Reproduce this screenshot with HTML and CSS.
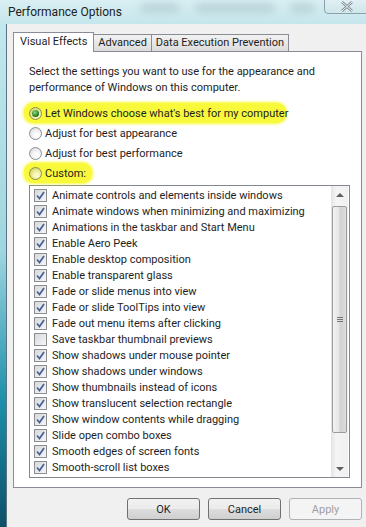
FILE: index.html
```html
<!DOCTYPE html>
<html lang="en">
<head>
    <meta charset="UTF-8">
    <meta name="viewport" content="width=device-width, initial-scale=1.0">
    <title>Performance Options</title>
    <link rel="stylesheet" href="styles.css">
</head>
<body>
    <div class="window">
        <div class="titlebar">
            <span class="title">Performance Options</span>
            <span class="blur b1"></span>
            <span class="blur b2"></span>
            <span class="blur b3"></span>
            <div class="close">
                <svg width="14" height="11" viewBox="0 0 14 11">
                    <path d="M2 1 L12 10 M12 1 L2 10" stroke="#7e8a90" stroke-width="2.4" fill="none"/>
                    <path d="M2 1 L12 10 M12 1 L2 10" stroke="#f4f8f9" stroke-width="1" fill="none"/>
                </svg>
            </div>
        </div>
        <div class="frame">
            <div class="frame-left"></div>
            <div class="body">
                <div class="tabs">
                    <div class="tab active">Visual Effects</div>
                    <div class="tab">Advanced</div>
                    <div class="tab">Data Execution Prevention</div>
                </div>
                <div class="panel">
                    <p class="intro">Select the settings you want to use for the appearance and performance of Windows on this computer.</p>

                    <div class="radios">
                        <div class="radio-row marked wide"><span class="radio checked"></span><span>Let Windows choose what's best for my computer</span></div>
                        <div class="radio-row"><span class="radio"></span><span>Adjust for best appearance</span></div>
                        <div class="radio-row"><span class="radio"></span><span>Adjust for best performance</span></div>
                        <div class="radio-row marked"><span class="radio"></span><span>Custom:</span></div>
                    </div>

                    <div class="listbox">
                        <div class="items" id="items"></div>
                        <div class="scrollbar">
                            <div class="arrow up"></div>
                            <div class="track"><div class="thumb"><span class="grip"></span></div></div>
                            <div class="arrow down"></div>
                        </div>
                    </div>
                </div>
                <div class="buttons">
                    <button class="btn">OK</button>
                    <button class="btn">Cancel</button>
                    <button class="btn" disabled>Apply</button>
                </div>
            </div>
        </div>
    </div>
    <script>
        // visual effects list, false = unchecked
        const effects = [
            ["Animate controls and elements inside windows", true],
            ["Animate windows when minimizing and maximizing", true],
            ["Animations in the taskbar and Start Menu", true],
            ["Enable Aero Peek", true],
            ["Enable desktop composition", true],
            ["Enable transparent glass", true],
            ["Fade or slide menus into view", true],
            ["Fade or slide ToolTips into view", true],
            ["Fade out menu items after clicking", true],
            ["Save taskbar thumbnail previews", false],
            ["Show shadows under mouse pointer", true],
            ["Show shadows under windows", true],
            ["Show thumbnails instead of icons", true],
            ["Show translucent selection rectangle", true],
            ["Show window contents while dragging", true],
            ["Slide open combo boxes", true],
            ["Smooth edges of screen fonts", true],
            ["Smooth-scroll list boxes", true]
        ];
        const tick = '<svg width="9" height="9" viewBox="0 0 9 9"><path d="M1 4.5 L3.5 7.5 L8 1" stroke="#4d6396" stroke-width="1.8" fill="none"/></svg>';
        const list = document.getElementById("items");
        effects.forEach(function(e) {
            const row = document.createElement("div");
            row.className = "item";
            row.innerHTML = '<span class="check">' + (e[1] ? tick : '') + '</span>' + e[0];
            list.appendChild(row);
        });
    </script>
</body>
</html>
```

FILE: styles.css
```css
body {
    margin: 0;
    font-family: Roboto, "Noto Sans", sans-serif;
    font-size: 11px;
    color: #1e1e1e;
    background: #f0f0f0;
}
.window {
    width: 366px;
    height: 527px;
    display: flex;
    flex-direction: column;
    overflow: hidden;
}
.titlebar {
    height: 24px;
    position: relative;
    display: flex;
    align-items: center;
    padding-left: 8px;
    background: linear-gradient(to bottom, #d9eff3, #c4e6ec);
}
.title {
    font-size: 12px;
    color: #222;
    position: relative;
    z-index: 1;
}
.blur {
    position: absolute;
    top: 4px;
    height: 8px;
    border-radius: 6px;
    background: #a9c2c8;
    filter: blur(4px);
    opacity: 0.7;
}
.b1 { left: 140px; width: 40px; }
.b2 { left: 195px; width: 80px; }
.b3 { left: 290px; width: 25px; }
.close {
    position: absolute;
    top: -3px;
    right: -4px;
    width: 46px;
    height: 17px;
    border: 1px solid #8aa3aa;
    border-radius: 0 0 4px 4px;
    background: linear-gradient(to bottom, #e3f1f4, #cfe6eb);
    display: flex;
    align-items: center;
    justify-content: center;
    padding-top: 2px;
    box-sizing: border-box;
}
.frame {
    flex: 1;
    display: flex;
}
.frame-left {
    width: 6px;
    border-right: 1px solid #5a7580;
    background: linear-gradient(to bottom, #c2e7ee 0%, #9fd6e0 45%, #1d8fab 75%, #0e4f68 100%);
}
.body {
    flex: 1;
    background: #f0f0f0;
    padding: 8px 4px 0 6px;
    display: flex;
    flex-direction: column;
}
.tabs {
    display: flex;
    align-items: flex-end;
    height: 19px;
    position: relative;
    z-index: 1;
}
.tab {
    height: 17px;
    padding: 0 4px;
    border: 1px solid #898c95;
    border-bottom: none;
    margin-right: -1px;
    background: linear-gradient(to bottom, #f2f2f2, #dcdcdc);
    line-height: 16px;
    box-sizing: border-box;
}
.tab.active {
    height: 20px;
    line-height: 18px;
    background: #fff;
    padding: 0 6px;
    margin-bottom: -1px;
    z-index: 2;
    position: relative;
    margin-right: 0;
}
.tab.active + .tab {
    border-left: none;
}
.panel {
    height: 437px;
    box-sizing: border-box;
    background: #fff;
    border: 1px solid #898c95;
    padding: 12px 11px 0 15px;
    display: flex;
    flex-direction: column;
}
.intro {
    margin: 0;
    line-height: 16px;
}
.radios {
    margin-top: 7px;
    display: flex;
    flex-direction: column;
}
.radio-row {
    height: 20px;
    display: flex;
    align-items: center;
    gap: 3px;
    position: relative;
    isolation: isolate;
}
.radio-row.marked::before {
    content: "";
    position: absolute;
    left: -5px;
    top: 0;
    width: 68px;
    height: 20px;
    border-radius: 9px;
    background: #f9f93c;
    box-shadow: 0 0 3px 1px #f9f93c;
    z-index: -1;
}
.radio-row.marked.wide::before {
    width: 262px;
}
.radio {
    width: 11px;
    height: 11px;
    border-radius: 50%;
    border: 1px solid #8a8f94;
    background: radial-gradient(circle at 60% 65%, #fdfdfd 20%, #d8d8d8 90%);
    position: relative;
    flex: none;
}
.radio-row.marked .radio {
    background: radial-gradient(circle at 60% 65%, #fafac0 20%, #cfcf5a 90%);
    border-color: #8d8d4a;
}
.radio.checked::after {
    content: "";
    position: absolute;
    left: 2px;
    top: 2px;
    width: 7px;
    height: 7px;
    border-radius: 50%;
    background: radial-gradient(circle at 40% 35%, #8be07a, #1d6e1f 70%);
}
.listbox {
    margin-top: 2px;
    height: 293px;
    box-sizing: border-box;
    border: 1px solid #828790;
    display: flex;
    width: 321px;
}
.items {
    flex: 1;
    padding: 1px 0 0 4px;
}
.item {
    height: 16px;
    display: flex;
    align-items: center;
    gap: 5px;
    white-space: nowrap;
}
.check {
    width: 11px;
    height: 11px;
    border: 1px solid #8e8f8f;
    background: linear-gradient(135deg, #d4d9e0, #f6f6f6);
    display: flex;
    align-items: center;
    justify-content: center;
    flex: none;
}
.scrollbar {
    width: 17px;
    display: flex;
    flex-direction: column;
    background: linear-gradient(to right, #e3e3e3, #f5f5f5 30%, #f0f0f0);
    margin-right: 1px;
}
.arrow {
    height: 17px;
    display: flex;
    align-items: center;
    justify-content: center;
}
.arrow::after {
    content: "";
    width: 0;
    height: 0;
    border-left: 4px solid transparent;
    border-right: 4px solid transparent;
}
.arrow.up::after { border-bottom: 4px solid #5f5f5f; }
.arrow.down::after { border-top: 4px solid #5f5f5f; }
.track {
    flex: 1;
    padding: 3px 1px 0 1px;
}
.thumb {
    height: 225px;
    border: 1px solid #9b9b9b;
    border-radius: 2px;
    background: linear-gradient(to right, #f3f3f3, #e6e6e6 45%, #d2d2d2 55%, #dcdcdc);
    display: flex;
    align-items: center;
    justify-content: center;
}
.grip {
    width: 6px;
    height: 5px;
    border-top: 1px solid #777;
    border-bottom: 1px solid #777;
    position: relative;
    box-sizing: border-box;
}
.grip::after {
    content: "";
    position: absolute;
    left: 0;
    right: 0;
    top: 1px;
    border-top: 1px solid #777;
}
.buttons {
    display: flex;
    justify-content: flex-end;
    gap: 8px;
    margin-top: 10px;
}
.btn {
    width: 73px;
    height: 22px;
    border: 1px solid #707070;
    border-radius: 3px;
    background: linear-gradient(to bottom, #f2f2f2 0%, #ebebeb 50%, #dddddd 51%, #cfcfcf 100%);
    font-family: Roboto, "Noto Sans", sans-serif;
    font-size: 11px;
    color: #1e1e1e;
    padding: 0;
}
.btn:disabled {
    border-color: #adb2b5;
    background: #f4f4f4;
    color: #a0a0a0;
}
```
